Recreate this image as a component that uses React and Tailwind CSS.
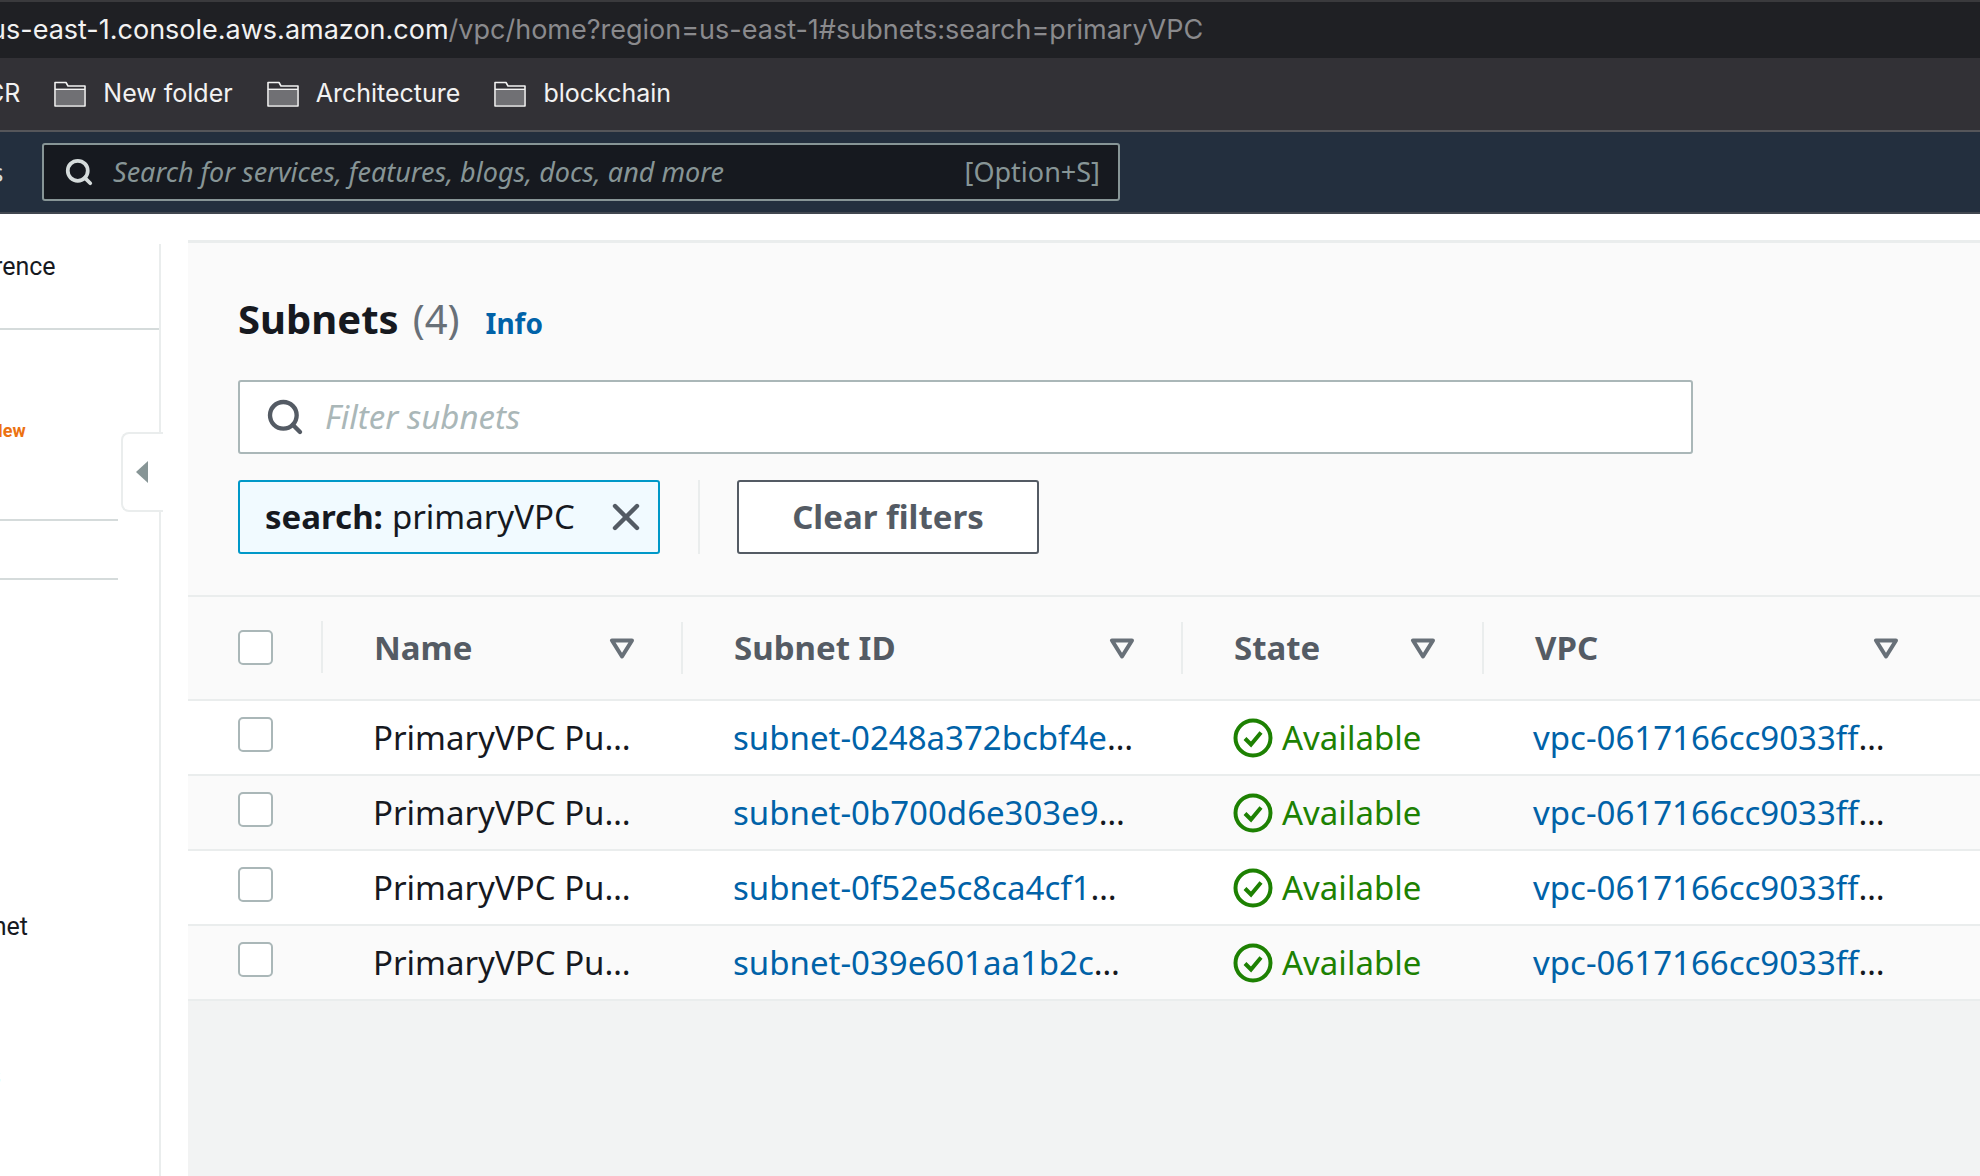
import { Search, X } from "lucide-react";

const ember = "font-['Noto_Sans',sans-serif]";

const FolderIcon = () => (
  <svg width="32" height="26" viewBox="0 0 32 26" className="shrink-0">
    <path d="M1 25V1.5h11l2 3.5h17v20z" fill="#323136" stroke="#f2f2f2" strokeWidth="1.6" strokeLinejoin="round" />
    <rect x="2" y="9" width="28" height="15" fill="#707074" />
    <path d="M1 8.3h30" stroke="#f2f2f2" strokeWidth="1.4" />
  </svg>
);

const FilterIcon = () => (
  <svg width="26" height="21" viewBox="0 0 26 21" className="shrink-0">
    <path d="M3 2.5h20L13 18.5z" fill="none" stroke="#687078" strokeWidth="4" strokeLinejoin="round" />
  </svg>
);

const AvailableIcon = () => (
  <svg width="40" height="40" viewBox="0 0 40 40" className="shrink-0">
    <circle cx="20" cy="20" r="17.5" fill="none" stroke="#1d8102" strokeWidth="4" />
    <path d="M12 20.5l6 6 10-12" fill="none" stroke="#1d8102" strokeWidth="4" />
  </svg>
);

const Bookmark = ({ label }) => (
  <div className="flex items-center gap-[17px]">
    <FolderIcon />
    <span className="text-[25px] text-[#f2f2f2]">{label}</span>
  </div>
);

const Checkbox = () => (
  <div className="w-[35px] h-[35px] shrink-0 rounded-[5px] border-2 border-[#aab7b8] bg-white" />
);

const HeaderCell = ({ label, width, last }) => (
  <div className={`${width} h-[52px] flex items-center justify-between pl-[51px] ${last ? "pr-[31px]" : "pr-[46px] border-r-2 border-[#eaeded]"}`}>
    <span className="text-[33px] font-bold text-[#545b64]">{label}</span>
    <FilterIcon />
  </div>
);

const rows = [
  "subnet-0248a372bcbf4e3d1",
  "subnet-0b700d6e303e9ac27",
  "subnet-0f52e5c8ca4cf1b06",
  "subnet-039e601aa1b2c7d48",
];

const Row = ({ id, index }) => (
  <div className={`h-[75px] border-b-2 border-[#eaeded] flex items-center pl-[50px] text-[33px] ${index % 2 ? "bg-[#fafafa]" : "bg-white"}`}>
    <div className="w-[135px] shrink-0 -mt-[6px]">
      <Checkbox />
    </div>
    <div className="w-[311px] shrink-0 pr-[50px] truncate text-[#16191f]">PrimaryVPC Public Subnet</div>
    <div className="w-[500px] shrink-0 pl-[49px] pr-[50px] truncate text-[#16191f]">
      <span className="text-[#0062a8]">{id}</span>
    </div>
    <div className="w-[300px] shrink-0 pl-[49px] flex items-center gap-[9px] text-[#1d8102]">
      <AvailableIcon />
      Available
    </div>
    <div className="w-[434px] shrink-0 pl-[49px] pr-[20px] truncate text-[#16191f]">
      <span className="text-[#0062a8]">vpc-0617166cc9033ff7e2</span>
    </div>
  </div>
);

export default function App() {
  return (
    <div className={`w-[1980px] h-[1176px] overflow-hidden flex flex-col bg-white ${ember}`}>
      {/* Browser chrome */}
      <div className="h-[58px] shrink-0 border-t-2 border-[#3a3a3d] bg-[#1f2024] flex items-center overflow-hidden whitespace-nowrap font-['Inter',sans-serif] text-[27px]">
        <span className="text-[#f2f2f2] -ml-[10px]">us-east-1.console.aws.amazon.com</span>
        <span className="text-[#8a8a8d]">/vpc/home?region=us-east-1#subnets:search=primaryVPC</span>
      </div>
      <div className="h-[74px] shrink-0 border-b-2 border-[#55565a] bg-[#323136] flex items-center gap-[34px] overflow-hidden font-['Inter',sans-serif]">
        <span className="text-[25px] text-[#f2f2f2] -ml-[14px] mr-0">CR</span>
        <Bookmark label="New folder" />
        <Bookmark label="Architecture" />
        <Bookmark label="blockchain" />
      </div>

      {/* Console top bar */}
      <div className="h-[82px] shrink-0 border-b-2 border-[#414750] bg-[#232f3e] flex items-center overflow-hidden">
        <span className="text-[26px] text-[#d5dbdb] -ml-[9px] w-[51px] shrink-0">s</span>
        <div className="w-[1078px] h-[58px] flex items-center rounded-[3px] border-2 border-[#879596] bg-[#16191f] pl-[20px] pr-[18px] text-[27px] text-[#879596]">
          <Search size={30} strokeWidth={3} className="text-[#d5dbdb] shrink-0" />
          <span className="ml-[19px] italic">Search for services, features, blogs, docs, and more</span>
          <span className="ml-auto">[Option+S]</span>
        </div>
      </div>

      <div className="flex-1 min-h-0 flex">
        {/* Sidebar, cut off by the left edge */}
        <aside className="relative w-[188px] shrink-0 pt-[30px] pr-[27px] font-['Roboto',sans-serif]">
          <div className="h-full border-r-2 border-[#eaeded] text-[25px] text-[#16191f] overflow-hidden whitespace-nowrap">
            <div className="h-[86px] border-b-2 border-[#d5dbdb] border-r-2 -mr-[2px] pt-[4px]">
              <span className="block -ml-[65px]">Preference</span>
            </div>
            <div className="h-[189px] pt-[87px]">
              <span className="block -ml-[10px] text-[18px] font-bold text-[#ec7211]">New</span>
            </div>
            <div className="w-[118px] h-[61px] border-y-2 border-[#d5dbdb]" />
            <div className="pt-[328px] -ml-[50px]">Subnet</div>
            <div className="pt-[111px] -ml-[60px]">VPCs</div>
            <div className="pt-[76px] -ml-[60px]">Hosts</div>
          </div>
          <div className="absolute left-[121px] top-[218px] w-[42px] h-[80px] rounded-l-[8px] border-2 border-r-0 border-[#eaeded] bg-white flex items-center justify-center pr-[2px]">
            <svg width="14" height="24" viewBox="0 0 14 24">
              <path d="M13 1v22L1 12z" fill="#879596" />
            </svg>
          </div>
        </aside>

        {/* Subnets panel */}
        <main className="flex-1 min-w-0 mt-[26px] border-t-[3px] border-[#eaeded] bg-[#f2f3f3] flex flex-col">
          <div className="bg-[#fafafa] border-b-2 border-[#eaeded]">
            <div className="px-[50px] h-[352px] pt-[46px]">
              <div className="flex items-baseline h-[58px]">
                <span className="text-[40px] font-bold text-[#16191f]">Subnets</span>
                <span className="ml-[14px] text-[40px] text-[#687078]">(4)</span>
                <span className="ml-[26px] text-[28px] font-bold text-[#0062a8]">Info</span>
              </div>
              <div className="mt-[33px] w-[1455px] h-[74px] flex items-center rounded-[3px] border-2 border-[#aab7b8] bg-white pl-[25px] text-[33px] text-[#aab7b8]">
                <Search size={40} strokeWidth={2.6} className="text-[#545b64] shrink-0" />
                <span className="ml-[20px] italic">Filter subnets</span>
              </div>
              <div className="mt-[26px] flex items-center">
                <div className="w-[422px] h-[74px] flex items-center rounded-[3px] border-2 border-[#0098c8] bg-[#f1faff] pl-[25px] text-[33px] text-[#16191f]">
                  <span className="font-bold">search:</span>
                  <span className="ml-[9px]">primaryVPC</span>
                  <X size={44} strokeWidth={2.4} className="ml-auto mr-[10px] text-[#545b64]" />
                </div>
                <div className="ml-[38px] w-[2px] h-[74px] bg-[#eaeded]" />
                <button className="ml-[37px] w-[302px] h-[74px] rounded-[3px] border-2 border-[#545b64] bg-white text-[33px] font-bold text-[#545b64]">
                  Clear filters
                </button>
              </div>
            </div>
          </div>
          <div className="h-[104px] shrink-0 bg-[#fafafa] border-b-2 border-[#eaeded] flex items-center pl-[50px]">
            <div className="w-[85px] shrink-0 h-[52px] flex items-center border-r-2 border-[#eaeded] -mt-[2px]">
              <Checkbox />
            </div>
            <HeaderCell label="Name" width="w-[360px]" />
            <HeaderCell label="Subnet ID" width="w-[500px]" />
            <HeaderCell label="State" width="w-[301px]" />
            <HeaderCell label="VPC" width="w-[446px]" last />
          </div>
          {rows.map((id, i) => (
            <Row key={id} id={id} index={i} />
          ))}
        </main>
      </div>
    </div>
  );
}
